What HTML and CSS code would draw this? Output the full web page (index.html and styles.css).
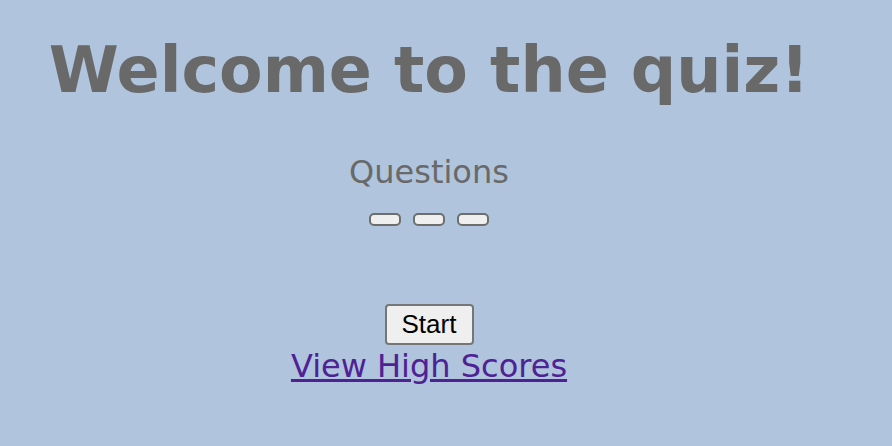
FILE: index.html
```html
<!DOCTYPE html>
<html>
<head>
<meta charset="utf-8">
<link rel="stylesheet" href="styles.css">
</head>
<body>
<main class="quiz">
  <h1 class="title">Welcome to the quiz!</h1>
  <h2 class="subtitle">Questions</h2>
  <div class="pips">
    <span class="pip"></span>
    <span class="pip"></span>
    <span class="pip"></span>
  </div>
  <div class="actions">
    <button class="start">Start</button>
    <a class="scores" href="#">View High Scores</a>
  </div>
</main>
</body>
</html>
```
FILE: styles.css
```css
html, body {
  margin: 0;
  padding: 0;
  background: #b0c4de;
}
body {
  padding: 0 8px;
}
.quiz {
  width: 842px;
  display: flex;
  flex-direction: column;
  align-items: center;
  font-family: "DejaVu Sans", Verdana, sans-serif;
  color: #696969;
}
.title {
  margin: 31px 0 0;
  font-size: 63.5px;
  font-weight: bold;
  line-height: 79px;
}
.subtitle {
  margin: 42px 0 0;
  font-size: 32px;
  font-weight: normal;
  line-height: 40px;
}
.pips {
  display: flex;
  gap: 12px;
  margin-top: 21px;
}
.pip {
  display: block;
  width: 28px;
  height: 9px;
  border: 2px solid #6e6e6e;
  border-radius: 5px;
  background: #efefef;
}
.actions {
  margin-top: 78px;
  display: flex;
  flex-direction: column;
  align-items: center;
}
.start {
  font-family: "Liberation Sans", Arial, sans-serif;
  font-size: 26px;
  color: #000;
  background: #efefef;
  border: 2px solid #767676;
  border-radius: 4px;
  width: 89px;
  height: 41px;
  padding: 0;
}
.scores {
  margin-top: 1px;
  font-size: 32px;
  line-height: 40px;
  color: #4f2293;
}
```
